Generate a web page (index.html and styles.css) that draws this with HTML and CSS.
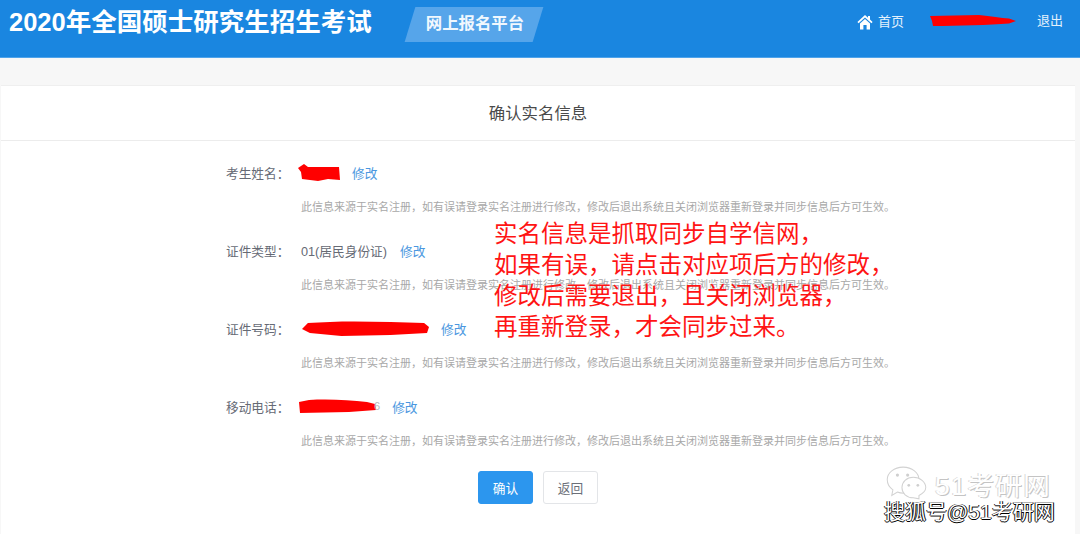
FILE: index.html
```html
<!DOCTYPE html>
<html lang="zh-CN">
<head>
<meta charset="utf-8">
<title>确认实名信息</title>
<link rel="stylesheet" href="styles.css">
</head>
<body>
<header class="topbar">
  <div class="brand">
    <h1 class="brand-title">2020年全国硕士研究生招生考试</h1>
    <div class="brand-tag"><span>网上报名平台</span></div>
  </div>
  <nav class="nav">
    <a class="nav-home">
      <svg class="home-icon" viewBox="0 0 16 16" width="16" height="16"><path d="M8 1 L0.4 8 L1.6 9.3 L8 3.6 L14.4 9.3 L15.6 8 L13 5.6 V2 H11 V3.8 Z" fill="#fff"/><path d="M3 9.6 L8 5 L13 9.6 V15.5 H9.6 V11 H6.4 V15.5 H3 Z" fill="#fff"/></svg>
      首页
    </a>
    <svg class="scribble nav-scribble" viewBox="0 0 88 12" width="88" height="12"><path d="M1 1 L50 0 C62 1 72 3 80 3.5 L87 6 L80 8.5 C60 10 30 11 4 11 L3 6 Z" fill="#f00"/></svg>
    <a class="nav-exit">退出</a>
  </nav>
</header>

<main class="card">
  <h2 class="card-title">确认实名信息</h2>
  <div class="form">
    <div class="field">
      <div class="field-row">
        <span class="label">考生姓名：</span>
        <svg class="scribble s-name" viewBox="0 0 42 18" width="42" height="18"><path d="M0 4 L6 0 L10 3 L41 3 L42 16 L30 15 L20 17 L4 15 L3 8 Z" fill="#f00"/></svg>
        <a class="edit">修改</a>
      </div>
      <p class="note">此信息来源于实名注册，如有误请登录实名注册进行修改，修改后退出系统且关闭浏览器重新登录并同步信息后方可生效。</p>
    </div>
    <div class="field">
      <div class="field-row">
        <span class="label">证件类型：</span>
        <span class="value">01(居民身份证)</span>
        <a class="edit">修改</a>
      </div>
      <p class="note">此信息来源于实名注册，如有误请登录实名注册进行修改，修改后退出系统且关闭浏览器重新登录并同步信息后方可生效。</p>
    </div>
    <div class="field">
      <div class="field-row">
        <span class="label">证件号码：</span>
        <svg class="scribble s-id" viewBox="0 0 129 15" width="127" height="15"><path d="M0 8 L6 2 C30 0 60 0 90 1 L124 2 L129 6 L127 12 L90 14 L40 15 L8 12 Z" fill="#f00"/></svg>
        <a class="edit">修改</a>
      </div>
      <p class="note">此信息来源于实名注册，如有误请登录实名注册进行修改，修改后退出系统且关闭浏览器重新登录并同步信息后方可生效。</p>
    </div>
    <div class="field">
      <div class="field-row">
        <span class="label">移动电话：</span>
        <svg class="scribble s-phone" viewBox="0 0 77 14" width="77" height="14"><path d="M0 3 L10 1 C30 0 50 1 68 3 L76 5 L77 11 L50 13 L1 14 Z" fill="#f00"/></svg>
        <span class="value phone-tail">6</span>
        <a class="edit">修改</a>
      </div>
      <p class="note">此信息来源于实名注册，如有误请登录实名注册进行修改，修改后退出系统且关闭浏览器重新登录并同步信息后方可生效。</p>
    </div>
    <div class="actions">
      <button class="btn btn-primary">确认</button>
      <button class="btn btn-default">返回</button>
    </div>
  </div>
</main>

<div class="annotation">实名信息是抓取同步自学信网，<br>如果有误，请点击对应项后方的修改，<br>修改后需要退出，且关闭浏览器，<br>再重新登录，才会同步过来。</div>

<div class="watermark">
  <div class="wm-top">
    <svg class="wm-icon" viewBox="0 0 36 30" width="43" height="34"><g fill="#fff" stroke="#d2d2d2" stroke-width="0.9"><path d="M15 1 C7 1 1 6 1 12 C1 16 3 19 6 21 L5 26 L10 23 C12 24 14 24 16 24 C23 24 29 19 29 12 C29 6 23 1 15 1 Z"/><path d="M24 10 C18 10 14 14 14 19 C14 24 18 28 24 28 L29 29 L29 26 C33 24 35 22 35 19 C35 14 30 10 24 10 Z"/></g><g fill="#cfcfcf"><circle cx="10" cy="8" r="1.4"/><circle cx="19" cy="8" r="1.4"/><circle cx="20" cy="17" r="1.2"/><circle cx="28" cy="17" r="1.2"/></g></svg>
    <span class="wm-name">51考研网</span>
  </div>
  <div class="wm-bottom">搜狐号@51考研网</div>
</div>
</body>
</html>
```
FILE: styles.css
```css
* { box-sizing: border-box; }
html, body { margin: 0; height: 534px; overflow: hidden; }
body {
  position: relative;
  background: #f7f7f7;
  font-family: "Liberation Sans", "Noto Sans CJK SC", sans-serif;
  color: #606266;
}
.topbar {
  height: 58px;
  background: #1a86e0;
  border-bottom: 1px solid #4fa3ea;
  display: flex;
  justify-content: space-between;
  padding: 0 17px 0 9px;
  color: #fff;
}
.brand { display: flex; align-items: flex-start; }
.brand-title {
  margin: 6px 0 0;
  font-size: 25.5px;
  line-height: 32px;
  font-weight: 700;
  white-space: nowrap;
}
.brand-tag {
  margin: 7px 0 0 38px;
  width: 128px;
  height: 35px;
  background: #56a5ea;
  transform: skewX(-17deg);
  display: flex;
  align-items: center;
  justify-content: center;
  padding-bottom: 5px;
}
.brand-tag span {
  transform: skewX(17deg);
  font-size: 16.4px;
  font-weight: 700;
  white-space: nowrap;
  color: #f1f8fe;
}
.nav {
  display: flex;
  align-items: flex-start;
  padding-top: 12px;
  font-size: 13px;
  line-height: 18px;
  color: #e3f1fc;
}
.nav-home { display: flex; align-items: center; gap: 5px; margin-top: 1px; }
.home-icon { display: block; }
.nav-scribble { margin: 3px 20px 0 25px; }
.scribble { display: block; flex: none; }

.card {
  margin: 27px 5px 0 1px;
  height: 470px;
  background: #fff;
  border-top: 1px solid #efefef;
}
.card-title {
  margin: 0;
  height: 55px;
  line-height: 54px;
  border-bottom: 1px solid #ececec;
  text-align: center;
  font-size: 16.4px;
  font-weight: 400;
  color: #4a4a4a;
}
.form { padding: 21px 0 0 225px; }
.field { height: 78px; }
.field-row {
  display: flex;
  align-items: center;
  height: 20px;
  font-size: 12.7px;
}
.label { width: 75px; flex: none; color: #666a75; }
.value { color: #666a75; }
.edit { color: #4a97e0; margin-left: 13px; }
.note {
  margin: 18px 0 0 75px;
  font-size: 11px;
  line-height: 14px;
  color: #a8a8a8;
  white-space: nowrap;
}
.s-name { margin-top: 2px; margin-left: -3px; }
.s-name + .edit { margin-left: 12px; }
.s-id { margin-left: 1px; }
.s-id + .edit { margin-left: 12px; }
.s-phone { margin-left: -2px; }
.phone-tail { color: #b4b6bb; font-size: 11px; margin-left: -2px; }
.phone-tail + .edit { margin-left: 12px; }
.actions {
  display: flex;
  gap: 10px;
  margin-left: 252px;
  margin-top: -3px;
}
.btn {
  width: 55px;
  height: 33px;
  border-radius: 3px;
  font: inherit;
  font-size: 12.7px;
  padding: 0;
}
.btn-primary { background: #2c96ee; border: 1px solid #2c96ee; color: #fff; }
.btn-default { background: #fff; border: 1px solid #e3e5e8; color: #6b6f78; }

.annotation {
  position: absolute;
  left: 494px;
  top: 219px;
  font-size: 23.5px;
  line-height: 31px;
  color: #ff1414;
  white-space: nowrap;
}
.watermark { position: absolute; left: 884px; top: 466px; }
.wm-top { display: flex; align-items: center; margin-left: 1px; height: 34px; }
.wm-icon { display: block; flex: none; }
.wm-name {
  margin-left: 7px;
  font-size: 26.6px;
  letter-spacing: 1.4px;
  color: #fff;
  text-shadow: 1px 1px 0 #c4c4c4, -1px 0 0 #d8d8d8;
  white-space: nowrap;
}
.wm-bottom {
  font-size: 21px;
  line-height: 22px;
  margin-top: 1px;
  color: #fff;
  text-shadow: 1px 0 0 #000, 0 1px 0 #000, -1px 0 0 #222;
  white-space: nowrap;
}
```
